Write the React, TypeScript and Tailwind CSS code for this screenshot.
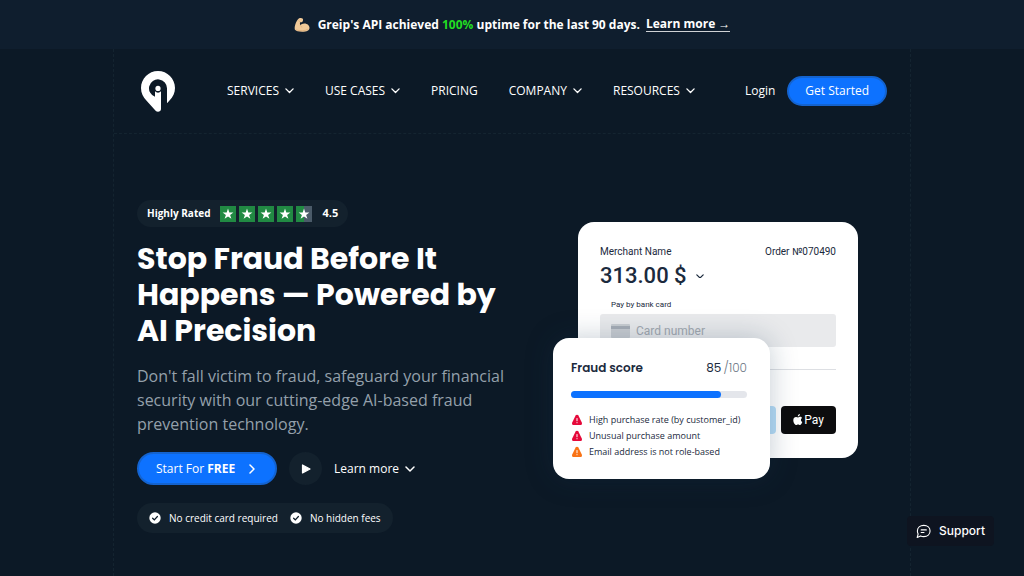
import type { ReactNode } from "react";

const stars = [100, 100, 100, 100, 50];

const menu = [
  { label: "SERVICES", children: true },
  { label: "USE CASES", children: true },
  { label: "PRICING", children: false },
  { label: "COMPANY", children: true },
  { label: "RESOURCES", children: true },
];

const alerts = [
  { text: "High purchase rate (by customer_id)", color: "text-[#e5093a]" },
  { text: "Unusual purchase amount", color: "text-[#e5093a]" },
  { text: "Email address is not role-based", color: "text-[#f97316]" },
];

const Chevron = ({ className = "" }: { className?: string }) => (
  <svg
    viewBox="0 0 10 6"
    fill="none"
    stroke="currentColor"
    strokeWidth="1.5"
    strokeLinecap="round"
    strokeLinejoin="round"
    className={className}
    aria-hidden="true"
  >
    <path d="M1 1l4 4 4-4" />
  </svg>
);

const Logo = () => (
  <svg viewBox="0 0 34 41" className="h-[41px] w-[34px]" aria-hidden="true">
    <path
      fill="#fff"
      fillRule="evenodd"
      d="M17 0C7.600 0 0 7.600 0 17c0 5.200 2.200 9.300 5.600 12.800l9 9.900c1.800 2 5.400 1 5.400-1.700V20.300a4 4 0 0 1-6 0v5.500a9 9 0 1 1 12-8.300v14.800l2.500-2.700C32 26 34 22 34 17 34 7.600 26.400 0 17 0z"
    />
    <circle cx="17" cy="17.400" r="2.600" fill="#fff" />
  </svg>
);

const Muscle = () => (
  <svg viewBox="0 0 16 16" className="size-4" aria-hidden="true">
    <path
      fill="#f0c998"
      d="M4.800 1.500c1.300-.7 3.300-.6 4 .2.500.7.300 2.600-.6 3.200-.7.500-1.600.3-2.100.1-.3 1.200-.2 2.300.2 3.300 1-1.300 2.500-2 4.200-1.900 2.800.1 5 2 5 4.400 0 2.700-2.700 4-7.200 4-3.800 0-6.500-.7-7.300-2C-.200 10.700 2.200 3.500 4.800 1.500z"
    />
    <path
      fill="none"
      stroke="#d7a56e"
      strokeWidth=".6"
      strokeLinecap="round"
      d="M6.200 5c-.7-.2-1.200-.8-1.400-1.300M6.300 8.300c.2.900.8 1.500 1.600 1.700M2.500 13c3 1.200 9 1 11-.5"
    />
  </svg>
);

const Star = ({ fill }: { fill: number }) => (
  <svg viewBox="0 0 16 16" className="size-4" aria-hidden="true">
    <rect width="16" height="16" fill="#4b5b69" />
    <rect width={(16 * fill) / 100} height="16" fill="#218a43" />
    <path
      fill="#fff"
      d="M8 2.600l1.300 3.900h4.100l-3.300 2.400 1.300 3.900L8 10.400l-3.400 2.400 1.300-3.900-3.300-2.400h4.100z"
    />
  </svg>
);

const CheckCircle = () => (
  <svg viewBox="0 0 12 12" className="size-3 shrink-0" aria-hidden="true">
    <circle cx="6" cy="6" r="5.700" fill="#fff" />
    <path
      d="M3.600 6.200l1.700 1.600 3.100-3.300"
      fill="none"
      stroke="#0c1a27"
      strokeWidth="1.200"
      strokeLinecap="round"
    />
  </svg>
);

const Warning = ({ className }: { className: string }) => (
  <svg viewBox="0 0 12 12" className={`size-3 shrink-0 ${className}`} aria-hidden="true">
    <path
      fill="currentColor"
      d="M4.600 1.500c.6-1.100 2.200-1.100 2.800 0l3.400 6.900c.6 1.300-.1 2.600-1.400 2.600H2.600c-1.300 0-2-1.300-1.400-2.600z"
    />
    <path d="M6 4.500v2.300M6 8.600v.2" stroke="#fff" strokeWidth="1" strokeLinecap="round" />
  </svg>
);

const Apple = () => (
  <svg viewBox="0 0 10 12" className="h-3 w-[10px]" aria-hidden="true">
    <path
      fill="#fff"
      d="M6.900 0c.1 1.200-.9 2.500-2.100 2.500C4.700 1.300 5.800.1 6.900 0zM8.900 4.100c-1.500 1-1.300 3.200.4 3.900-.5 1.500-1.400 3-2.300 3-.8 0-1-.5-1.900-.5s-1.200.5-1.900.5C1.900 11 .3 8.300.3 6.200c0-2.200 1.400-3.300 2.700-3.300.9 0 1.500.5 2.100.5s1.300-.6 2.400-.6c.5 0 1.300.3 1.400 1.300z"
    />
  </svg>
);

const Pill = ({ children, className }: { children: ReactNode; className: string }) => (
  <div className={`flex w-fit items-center rounded-full bg-[#13212d] ${className}`}>{children}</div>
);

const Banner = () => (
  <div className="flex h-[49px] items-center justify-center bg-[#0f1e2e] text-[12px] font-bold">
    <Muscle />
    <p className="ml-2">
      Greip's API achieved <span className="text-[#22dd22]">100%</span> uptime for the last 90 days.
    </p>
    <a href="#uptime" className="ml-[6px] border-b border-white/80 leading-[14px]">
      Learn more →
    </a>
  </div>
);

const Header = () => (
  <header className="flex h-[85px] items-center border-b border-dashed border-[#142430] pr-[23px] pl-[27px] text-[12px]">
    <a href="#home" aria-label="Greip">
      <Logo />
    </a>
    <nav className="ml-[52px] flex items-center gap-[31px]">
      {menu.map((item) =>
        item.children ? (
          <button key={item.label} type="button" className="flex items-center gap-[6px]">
            {item.label}
            <Chevron className="w-[9px]" />
          </button>
        ) : (
          <a key={item.label} href="#pricing">
            {item.label}
          </a>
        ),
      )}
    </nav>
    <a href="#login" className="ml-auto">
      Login
    </a>
    <button
      type="button"
      className="ml-3 h-[30px] rounded-full border-2 border-[#1463cf] bg-[#0d72ff] px-4"
    >
      Get Started
    </button>
  </header>
);

const Intro = () => (
  <div className="w-[370px]">
    <Pill className="h-[27px] px-[10px] text-[10px] font-bold">
      Highly Rated
      <div className="mx-[10px] flex gap-[3px]">
        {stars.map((fill, i) => (
          <Star key={i} fill={fill} />
        ))}
      </div>
      <span className="text-[11px]">4.5</span>
    </Pill>
    <h1 className="mt-[14px] font-[Poppins,Inter,sans-serif] text-[30px] leading-9 font-bold">
      Stop Fraud Before It
      <br />
      Happens — Powered by
      <br />
      AI Precision
    </h1>
    <p className="mt-[15px] text-[16px] leading-6 text-[#94a0ab]">
      Don't fall victim to fraud, safeguard your financial security with our cutting-edge AI-based
      fraud prevention technology.
    </p>
    <div className="mt-4 flex items-center text-[12px]">
      <button
        type="button"
        className="flex h-[33px] w-[140px] items-center rounded-full border-2 border-[#1463cf] bg-[#0d72ff] pl-[17px]"
      >
        Start For&nbsp;<b>FREE</b>
        <Chevron className="ml-3 w-[10px] -rotate-90" />
      </button>
      <button
        type="button"
        aria-label="Play video"
        className="ml-3 flex size-[33px] items-center justify-center rounded-full bg-[#13212d]"
      >
        <svg viewBox="0 0 10 10" className="size-[10px]" aria-hidden="true">
          <path
            d="M1.500 1v8L9 5z"
            fill="#fff"
            stroke="#fff"
            strokeWidth="1.200"
            strokeLinejoin="round"
          />
        </svg>
      </button>
      <button type="button" className="ml-3 flex items-center gap-[6px]">
        Learn more
        <Chevron className="w-[10px]" />
      </button>
    </div>
    <Pill className="mt-[18px] h-[30px] px-3 text-[10px]">
      <CheckCircle />
      <span className="mr-3 ml-2">No credit card required</span>
      <CheckCircle />
      <span className="ml-2">No hidden fees</span>
    </Pill>
  </div>
);

const PaymentCard = () => (
  <div className="ml-[25px] h-[236px] w-[280px] rounded-2xl bg-white px-[22px] pt-6 font-[Roboto,sans-serif] text-[#1b2a3d]">
    <div className="flex justify-between text-[10px] leading-3">
      <span>Merchant Name</span>
      <span>Order №070490</span>
    </div>
    <div className="mt-1 flex items-center gap-[9px] text-[22px] leading-7 font-medium">
      313.00 $
      <Chevron className="w-2" />
    </div>
    <label htmlFor="card" className="mt-[10px] ml-[11px] block text-[8px] leading-[10px]">
      Pay by bank card
    </label>
    <div className="mt-1 flex h-[33px] items-center gap-[6px] rounded-[3px] bg-[#e9eaec] pl-[11px]">
      <svg viewBox="0 0 19 14" className="h-[14px] w-[19px]" aria-hidden="true">
        <rect width="19" height="14" rx="1" fill="#c9cdd2" />
        <rect y="2" width="19" height="3" fill="#a6adb6" />
      </svg>
      <input
        id="card"
        placeholder="Card number"
        className="w-40 bg-transparent text-[12px] outline-none placeholder:text-[#a2a8b0]"
      />
    </div>
    <hr className="mt-[22px] border-[#dddfe3]" />
    <div className="mt-9 flex justify-end gap-[5px]">
      <div className="h-7 w-[55px] rounded-[4px] bg-[#b5dcf7]" />
      <button
        type="button"
        className="flex h-7 w-[55px] items-center justify-center gap-px rounded-[4px] bg-[#0c0c0e] text-[12px] text-white"
      >
        <Apple />
        Pay
      </button>
    </div>
  </div>
);

const ScoreCard = () => (
  <div className="absolute top-[116px] left-0 h-[141px] w-[217px] rounded-2xl bg-white pt-[22px] pr-[23px] pl-[18px] text-[#1b2a3d] shadow-[0_0_28px_rgba(20,50,80,0.25)]">
    <div className="flex justify-between font-[Poppins,Inter,sans-serif] text-[12px] leading-4">
      <b className="font-semibold">Fraud score</b>
      <span className="flex gap-[2px]">
        85<span className="font-light text-[#6b7684]">/100</span>
      </span>
    </div>
    <div className="mt-[15px] h-[7px] rounded-full bg-[#e4e6eb]">
      <div className="h-full rounded-full bg-[#0d72ff]" style={{ width: "85%" }} />
    </div>
    <ul className="mt-[14px] text-[9px] leading-4">
      {alerts.map((alert) => (
        <li key={alert.text} className="flex items-center gap-[6px]">
          <Warning className={alert.color} />
          {alert.text}
        </li>
      ))}
    </ul>
  </div>
);

const App = () => {
  return (
    <div className="min-h-screen bg-[#0c1926] font-['Open_Sans',sans-serif] text-white">
      <Banner />
      <div className="mx-auto min-h-[527px] max-w-[798px] border-x border-dashed border-[#142430]">
        <Header />
        <main className="flex items-start justify-between pt-[66px] pr-[52px] pl-[23px]">
          <Intro />
          <div className="relative mt-[22px]">
            <PaymentCard />
            <ScoreCard />
          </div>
        </main>
      </div>
      <button
        type="button"
        className="fixed right-[30px] bottom-[30px] flex h-[30px] w-[87px] items-center justify-center gap-2 rounded bg-[#0e1420] font-[Inter,sans-serif] text-[12px] font-medium"
      >
        <svg
          viewBox="0 0 16 16"
          className="size-[15px]"
          fill="none"
          stroke="currentColor"
          strokeWidth="1.200"
          strokeLinecap="round"
          strokeLinejoin="round"
          aria-hidden="true"
        >
          <path d="M8.300 1.500c3.900 0 6.700 2.500 6.700 6s-2.800 6-6.700 6c-1.300 0-2.500-.3-3.500-.8L1.300 14.300l1-3.700C1.700 9.700 1.500 8.700 1.500 7.500c0-3.500 2.900-6 6.800-6zM5.500 6.300h5.500M5.500 9h3" />
        </svg>
        Support
      </button>
    </div>
  );
};

export default App;
